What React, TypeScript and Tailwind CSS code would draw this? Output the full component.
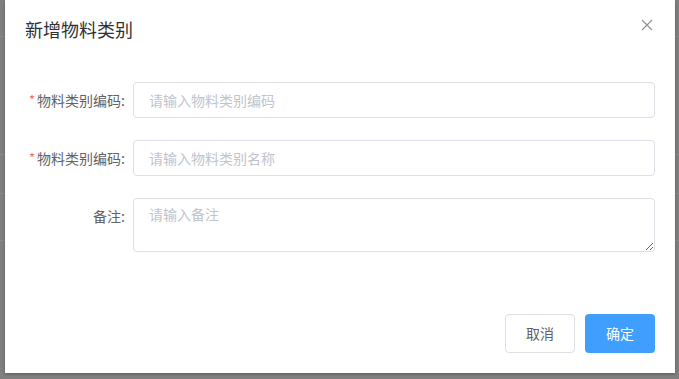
import React from "react";

const font = { fontFamily: '"Noto Sans CJK SC", "Noto Sans", sans-serif' };

function FormRow({
	label,
	required,
	children,
}: {
	label: string;
	required?: boolean;
	children: React.ReactNode;
}) {
	return (
		<div className="flex items-start">
			<label className="w-[108px] shrink-0 pr-[8px] h-[36px] flex items-center justify-end text-[14px] text-[#606266]">
				{required && <span className="text-[#f56c6c] mr-[2px] text-[13px]">*</span>}
				{label}
			</label>
			<div className="flex-1">{children}</div>
		</div>
	);
}

export default function App() {
	return (
		<div className="relative w-[679px] h-[379px] overflow-hidden bg-[#7f7f7f]" style={font}>
			{/* 背景ページ */}
			<div className="flex flex-col">
				<div className="h-[37px] border-b border-[#8a8a8a]" />
				<div className="h-[118px] border-b border-[#8a8a8a]" />
				<div className="h-[39px] border-b border-[#8a8a8a]" />
				<div className="h-[47px] border-b border-[#8a8a8a]" />
			</div>

			{/* ダイアログ */}
			<div className="absolute left-[5px] top-0 w-[670px] h-[373px] bg-white shadow-[0_1px_3px_rgba(0,0,0,0.3)] flex flex-col">
				<div className="flex items-center justify-between pl-[20px] pr-[22px] pt-[17px] h-[41px]">
					<span className="text-[18px] leading-[24px] text-[#303133]">新增物料类别</span>
					<svg width="12" height="12" viewBox="0 0 12 12" className="mt-[-8px]">
						<path d="M1 1L11 11M11 1L1 11" stroke="#909399" strokeWidth="1.2" />
					</svg>
				</div>

				<div className="flex flex-col gap-[22px] pt-[41px] pl-[20px] pr-[20px]">
					<FormRow label="物料类别编码:" required>
						<input
							placeholder="请输入物料类别编码"
							className="w-full h-[36px] px-[15px] border border-[#dcdfe6] rounded-[4px] text-[14px] text-[#606266] placeholder:text-[#c0c4cc] outline-none"
						/>
					</FormRow>
					<FormRow label="物料类别编码:" required>
						<input
							placeholder="请输入物料类别名称"
							className="w-full h-[36px] px-[15px] border border-[#dcdfe6] rounded-[4px] text-[14px] text-[#606266] placeholder:text-[#c0c4cc] outline-none"
						/>
					</FormRow>
					<FormRow label="备注:">
						<textarea
							placeholder="请输入备注"
							rows={2}
							className="block w-full h-[54px] px-[15px] py-[5px] border border-[#dcdfe6] rounded-[4px] text-[14px] leading-[21px] text-[#606266] placeholder:text-[#c0c4cc] outline-none"
						/>
					</FormRow>
				</div>

				<div className="mt-auto flex justify-end gap-[10px] pr-[20px] pb-[20px]">
					<button className="w-[70px] h-[39px] border border-[#dcdfe6] rounded-[4px] bg-white text-[14px] text-[#606266]">
						取消
					</button>
					<button className="w-[70px] h-[39px] rounded-[4px] bg-[#409eff] text-[14px] text-white">
						确定
					</button>
				</div>
			</div>
		</div>
	);
}
